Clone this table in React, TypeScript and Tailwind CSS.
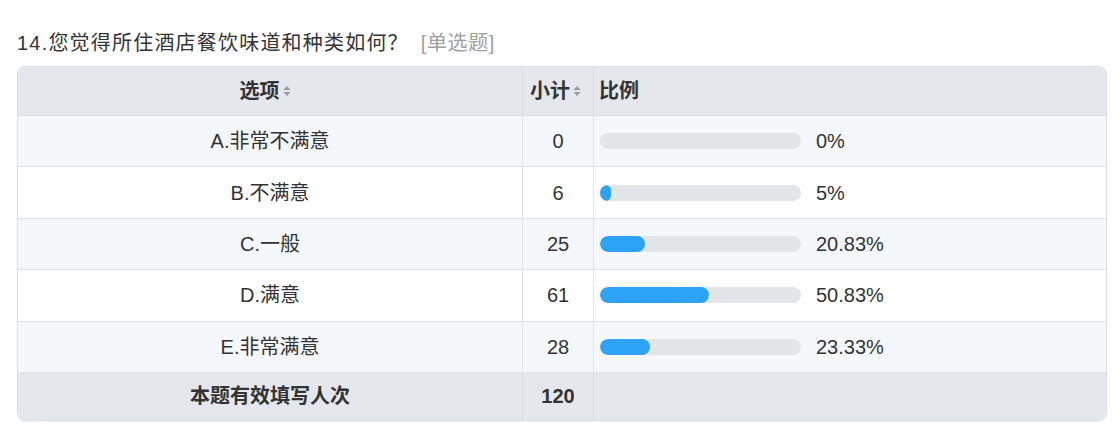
import React from "react";

const rows = [
  { label: "A.非常不满意", count: 0, pct: 0, text: "0%" },
  { label: "B.不满意", count: 6, pct: 5, text: "5%" },
  { label: "C.一般", count: 25, pct: 20.83, text: "20.83%" },
  { label: "D.满意", count: 61, pct: 50.83, text: "50.83%" },
  { label: "E.非常满意", count: 28, pct: 23.33, text: "23.33%" },
];

function SortIcon() {
  return (
    <svg width="8" height="12" viewBox="0 0 8 12" className="ml-[3px] shrink-0">
      <path d="M4 1 L7.5 5 L0.5 5 Z" fill="#9a9a9a" />
      <path d="M4 11 L7.5 7 L0.5 7 Z" fill="#9a9a9a" />
    </svg>
  );
}

export default function App() {
  const font = {
    fontFamily:
      '"Liberation Sans", Arial, "Noto Sans CJK SC", sans-serif',
  } as React.CSSProperties;
  return (
    <div
      className="w-[1116px] h-[429px] bg-white pl-[17px] pt-[28px] text-[#333]"
      style={font}
    >
      <div className="flex items-center h-[30px] text-[20px] leading-[30px] tracking-[1.2px]">
        <span className="text-[#333]">14.您觉得所住酒店餐饮味道和种类如何？</span>
        <span className="ml-[12px] text-[#a0a0a0] tracking-[0.6px]">[单选题]</span>
      </div>
      <div className="mt-[8px] w-[1090px] rounded-[8px] border border-[#dcdfe4] overflow-hidden shadow-[0_1px_2px_rgba(0,0,0,0.06)]">
        {/* header */}
        <div className="grid grid-cols-[505px_71px_1fr] h-[49px] bg-[#e4e7ec] border-b border-[#d9dce1] text-[20px] font-bold">
          <div className="flex items-center justify-center border-r border-[#d9dce1] pr-[10px]">
            <span>选项</span>
            <SortIcon />
          </div>
          <div className="flex items-center pl-[7px] border-r border-[#d9dce1]">
            <span>小计</span>
            <SortIcon />
          </div>
          <div className="flex items-center pl-[5px]">比例</div>
        </div>
        {rows.map((r, i) => (
          <div
            key={r.label}
            className={`grid grid-cols-[505px_71px_1fr] h-[51.4px] border-b border-[#dfe2e6] text-[20px] ${
              i % 2 === 0 ? "bg-[#f5f8fb]" : "bg-white"
            }`}
          >
            <div className="flex items-center justify-center border-r border-[#dfe2e6]">
              {r.label}
            </div>
            <div className="flex items-center justify-center border-r border-[#dfe2e6]">
              {r.count}
            </div>
            <div className="flex items-center pl-[6px]">
              <div className="w-[201px] h-[16px] rounded-full bg-[#e4e5e7] overflow-hidden">
                <div
                  className="h-full rounded-full bg-[#2ca3f7]"
                  style={{ width: `${(r.pct * 214) / 100}px` }}
                />
              </div>
              <span className="ml-[15px]">{r.text}</span>
            </div>
          </div>
        ))}
        <div className="grid grid-cols-[505px_71px_1fr] h-[47px] bg-[#e4e7ec] text-[20px] font-bold">
          <div className="flex items-center justify-center border-r border-[#d9dce1]">
            本题有效填写人次
          </div>
          <div className="flex items-center justify-center border-r border-[#d9dce1]">
            120
          </div>
          <div />
        </div>
      </div>
    </div>
  );
}
